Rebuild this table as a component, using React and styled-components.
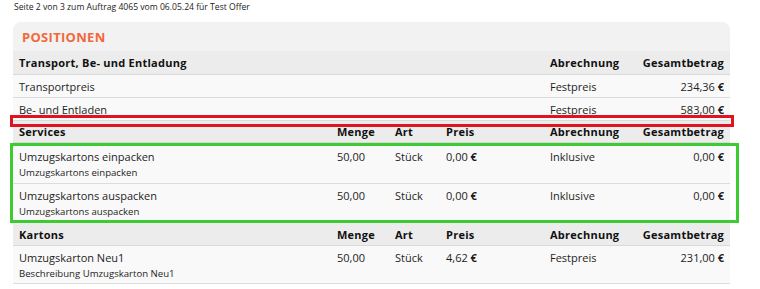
import React from "react";
import styled, { createGlobalStyle } from "styled-components";

const GlobalStyle = createGlobalStyle`
  html, body {
    margin: 0;
    padding: 0;
    background: #ffffff;
  }
  body {
    font-family: "Open Sans", "DejaVu Sans", sans-serif;
    color: #1e1e1e;
  }
`;

const Page = styled.div`
  position: relative;
  width: 760px;
  height: 289px;
  overflow: hidden;
  padding: 0 30px 0 13px;
  box-sizing: border-box;
`;

const PageNote = styled.div`
  height: 15px;
  line-height: 15px;
  padding-left: 1px;
  font-size: 8.6px;
  color: #222;
`;

const Panel = styled.div`
  margin-top: 7px;
  width: 717px;
  background: #f2f2f2;
  border-radius: 8px 8px 0 0;
`;

const PanelTitle = styled.div`
  height: 29px;
  line-height: 31px;
  padding-left: 9px;
  font-size: 13px;
  font-weight: 700;
  color: #f2683c;
  letter-spacing: 0.3px;
`;

const COLS = "318px 58px 51px 104px 90px 84px";

const HeadRow = styled.div`
  display: grid;
  grid-template-columns: ${COLS};
  height: ${(p) => p.$h || 22}px;
  align-items: center;
  padding: 0 6px;
  background: #ececec;
  border-bottom: 1px solid #d9d9d9;
  font-size: 11px;
  font-weight: 700;
  letter-spacing: 0.25px;
  color: #111;
  box-sizing: border-box;
`;

const Row = styled.div`
  display: grid;
  grid-template-columns: ${COLS};
  height: ${(p) => p.$h || 23}px;
  padding: 0 6px;
  background: #f9f9f9;
  border-bottom: 1px solid #dcdcdc;
  font-size: 11px;
  color: #1e1e1e;
  align-items: ${(p) => (p.$sub ? "start" : "center")};
  padding-top: ${(p) => (p.$sub ? p.$top : 0)}px;
  box-sizing: border-box;
`;

const Cell = styled.div`
  white-space: nowrap;
  text-align: ${(p) => (p.$right ? "right" : "left")};
  line-height: 15px;
`;

const Sub = styled.div`
  font-size: 9.6px;
  line-height: 12px;
  margin-top: 3px;
`;

const Mark = styled.div`
  position: absolute;
  border: 3px solid ${(p) => p.$color};
  box-sizing: border-box;
  pointer-events: none;
`;

const Euro = ({ v }) => (
  <>
    {v} <b>€</b>
  </>
);

const sections = [
  {
    title: "Transport, Be- und Entladung",
    cols: false,
    headH: 24,
    rows: [
      { name: "Transportpreis", billing: "Festpreis", total: "234,36" },
      { name: "Be- und Entladen", billing: "Festpreis", total: "583,00" },
    ],
  },
  {
    title: "Services",
    cols: true,
    headH: 22,
    rows: [
      {
        name: "Umzugskartons einpacken",
        sub: "Umzugskartons einpacken",
        qty: "50,00",
        unit: "Stück",
        price: "0,00",
        billing: "Inklusive",
        total: "0,00",
        h: 41,
        top: 6,
      },
      {
        name: "Umzugskartons auspacken",
        sub: "Umzugskartons auspacken",
        qty: "50,00",
        unit: "Stück",
        price: "0,00",
        billing: "Inklusive",
        total: "0,00",
        h: 39,
        top: 4,
      },
    ],
  },
  {
    title: "Kartons",
    cols: true,
    headH: 23,
    rows: [
      {
        name: "Umzugskarton Neu1",
        sub: "Beschreibung Umzugskarton Neu1",
        qty: "50,00",
        unit: "Stück",
        price: "4,62",
        billing: "Festpreis",
        total: "231,00",
        h: 38,
        top: 4,
      },
    ],
  },
];

export default function App() {
  return (
    <Page>
      <GlobalStyle />
      <PageNote>Seite 2 von 3 zum Auftrag 4065 vom 06.05.24 für Test Offer</PageNote>
      <Panel>
        <PanelTitle>POSITIONEN</PanelTitle>
        {sections.map((s) => (
          <React.Fragment key={s.title}>
            <HeadRow $h={s.headH}>
              <Cell>{s.title}</Cell>
              <Cell>{s.cols ? "Menge" : ""}</Cell>
              <Cell>{s.cols ? "Art" : ""}</Cell>
              <Cell>{s.cols ? "Preis" : ""}</Cell>
              <Cell>Abrechnung</Cell>
              <Cell $right>Gesamtbetrag</Cell>
            </HeadRow>
            {s.rows.map((r) => (
              <Row key={r.name} $sub={!!r.sub} $h={r.h} $top={r.top}>
                <Cell>
                  {r.name}
                  {r.sub && <Sub>{r.sub}</Sub>}
                </Cell>
                <Cell>{r.qty}</Cell>
                <Cell>{r.unit}</Cell>
                <Cell>{r.price && <Euro v={r.price} />}</Cell>
                <Cell>{r.billing}</Cell>
                <Cell $right>
                  <Euro v={r.total} />
                </Cell>
              </Row>
            ))}
          </React.Fragment>
        ))}
      </Panel>
      <Mark $color="#e0141e" style={{ left: 10, top: 115, width: 724, height: 12 }} />
      <Mark $color="#3ccc32" style={{ left: 10, top: 143, width: 729, height: 80 }} />
    </Page>
  );
}
